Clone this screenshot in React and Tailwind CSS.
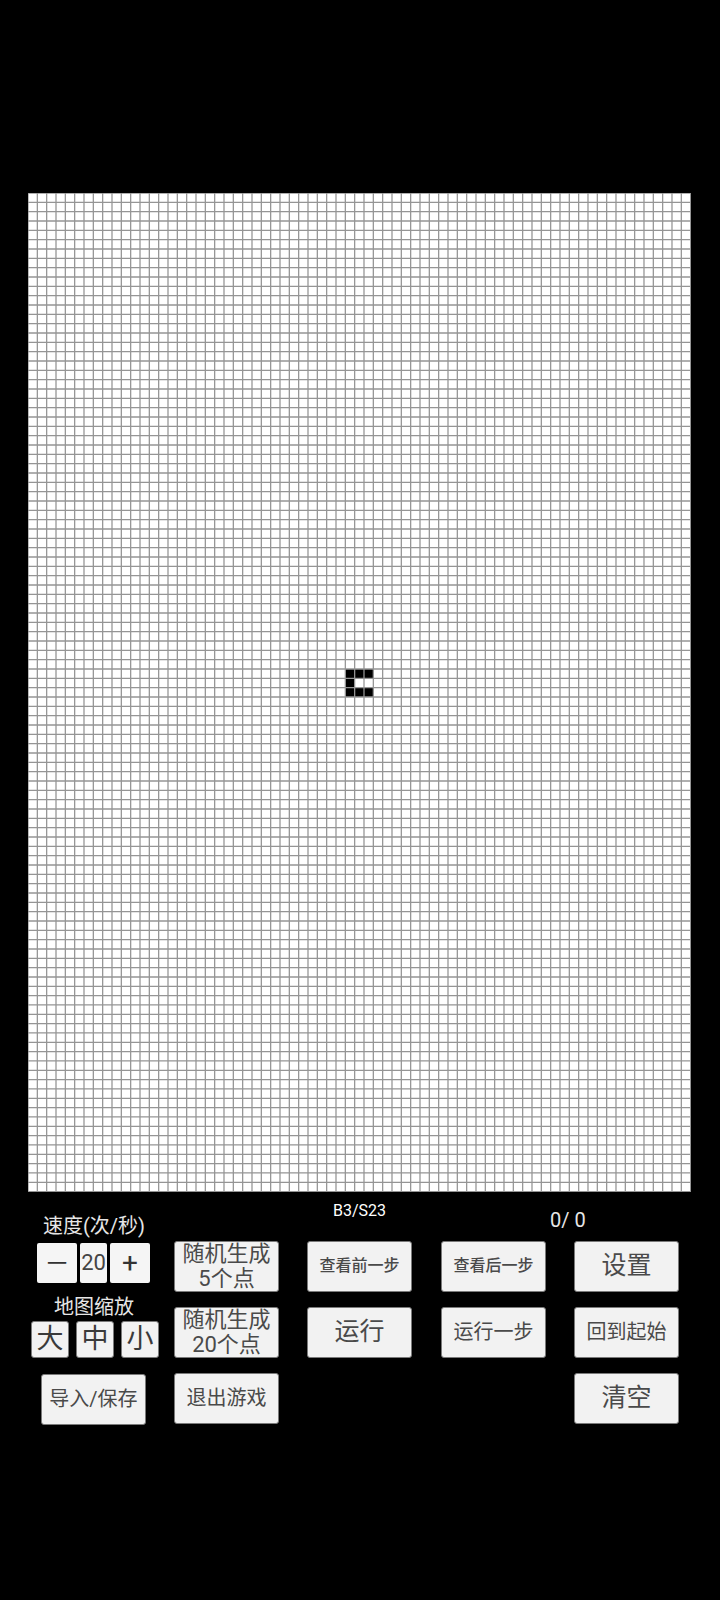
/**
 * Game of Life board with control panel.
 */

const COLS = 71;
const ROWS = 107;
const CELL = 14;
const LIVE = [
  [51, 34], [51, 35], [51, 36],
  [52, 34],
  [53, 34], [53, 35], [53, 36],
];

function Board() {
  let d = '';
  for (let c = 0; c <= COLS; c++) d += `M${c * CELL} 0V${ROWS * CELL}`;
  for (let r = 0; r <= ROWS; r++) d += `M0 ${r * CELL}H${COLS * CELL}`;
  return (
    <svg className="block w-[662.67px] h-[998.67px]" viewBox={`0 0 ${COLS * CELL} ${ROWS * CELL}`} preserveAspectRatio="none">
      <rect width={COLS * CELL} height={ROWS * CELL} fill="#ffffff" />
      {LIVE.map(([r, c]) => (
        <rect key={`${r}-${c}`} x={c * CELL} y={r * CELL} width={CELL} height={CELL} fill="#000000" />
      ))}
      <path d={d} stroke="#959595" strokeWidth="1.9" fill="none" />
    </svg>
  );
}

const btn =
  'flex items-center justify-center text-center w-[105px] h-[51px] bg-[#f2f2f2] border border-[#7a7a7a] rounded-[3px] text-[#4a4a4a]';

function Button({ children, className = '' }) {
  return <div className={`${btn} ${className}`}>{children}</div>;
}

export default function App() {
  return (
    <div className="min-h-[1600px] bg-black pt-[193px] font-['Roboto','Noto_Sans_CJK_SC',sans-serif]">
      {/* Board */}
      <div className="pl-[28px]">
        <Board />
      </div>

      {/* Controls */}
      <div className="flex pl-[31px]">
        {/* Speed + zoom column */}
        <div className="w-[128px] flex flex-col pt-[22px]">
          <div className="h-[24px] leading-[24px] text-[20px] text-[#e6e6e6] text-center pr-[2px]">速度(次/秒)</div>
          <div className="flex gap-[3px] ml-[6px] mt-[5px]">
            <div className="w-[40px] h-[40px] bg-[#f5f5f5] rounded-[2px] flex items-center justify-center text-[20px] text-[#333] font-['Noto_Sans_CJK_SC',sans-serif]">一</div>
            <div className="w-[27px] h-[40px] bg-[#f5f5f5] rounded-[2px] flex items-center justify-center text-[22px] text-[#444]">20</div>
            <div className="w-[40px] h-[40px] bg-[#f5f5f5] rounded-[2px] flex items-center justify-center text-[28px] text-[#333]">+</div>
          </div>
          <div className="h-[24px] leading-[24px] text-[20px] text-[#e6e6e6] text-center mt-[12px] pr-[2px]">地图缩放</div>
          <div className="flex gap-[7px] mt-[2px]">
            {['大', '中', '小'].map(t => (
              <div key={t} className="w-[38px] h-[37px] bg-[#f2f2f2] border border-[#7a7a7a] rounded-[3px] flex items-center justify-center text-[27px] text-[#3a3a3a]">{t}</div>
            ))}
          </div>
          <Button className="ml-[10px] mt-[16px] text-[20px]">导入/保存</Button>
        </div>

        {/* Random column */}
        <div className="flex flex-col gap-[15px] ml-[15px] pt-[49px]">
          <Button className="text-[22px] leading-[25px]">随机生成<br />5个点</Button>
          <Button className="text-[22px] leading-[25px]">随机生成<br />20个点</Button>
          <Button className="text-[20px]">退出游戏</Button>
        </div>

        {/* Step back / run */}
        <div className="flex flex-col ml-[28px] pt-[9px]">
          <div className="h-[19px] leading-[19px] text-[16px] text-white text-center">B3/S23</div>
          <div className="flex flex-col gap-[15px] mt-[21px]">
            <Button className="text-[16px] font-medium">查看前一步</Button>
            <Button className="text-[25px]">运行</Button>
          </div>
        </div>

        {/* Step forward / run one */}
        <div className="flex flex-col gap-[15px] ml-[29px] pt-[49px]">
          <Button className="text-[16px] font-medium">查看后一步</Button>
          <Button className="text-[20px]">运行一步</Button>
        </div>

        {/* Settings column */}
        <div className="flex flex-col ml-[28px] pt-[16px]">
          <div className="-ml-6 h-[24px] leading-[24px] text-[20px] text-[#e6e6e6]">0/ 0</div>
          <div className="flex flex-col gap-[15px] mt-[9px]">
            <Button className="text-[25px]">设置</Button>
            <Button className="text-[20px]">回到起始</Button>
            <Button className="text-[25px]">清空</Button>
          </div>
        </div>
      </div>
    </div>
  );
}
